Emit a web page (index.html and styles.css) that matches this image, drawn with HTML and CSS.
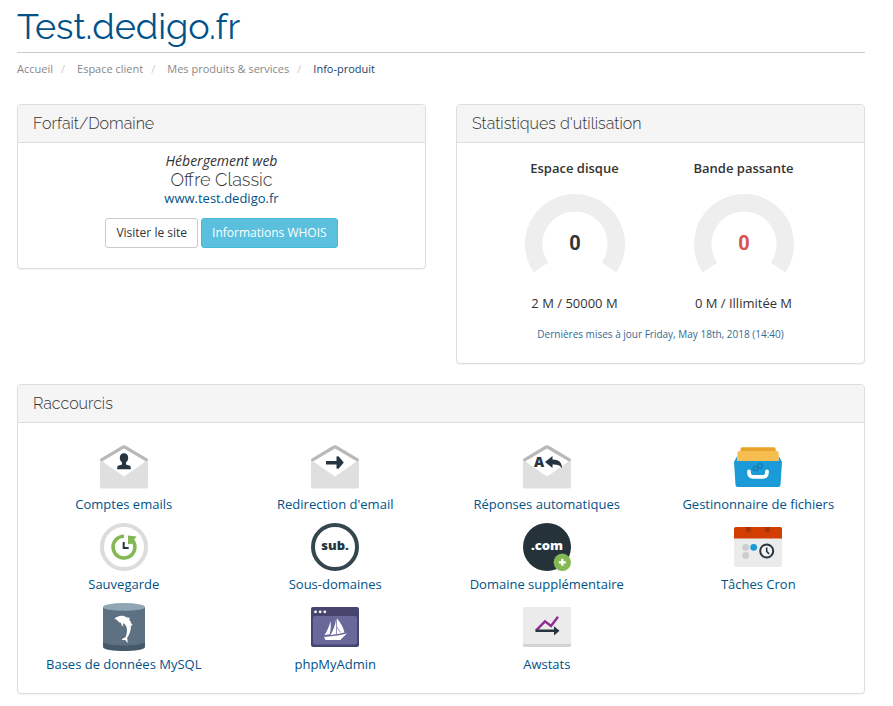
FILE: index.html
```
<!DOCTYPE html>
<html lang="fr">
<head>
<meta charset="utf-8">
<meta name="viewport" content="width=device-width, initial-scale=1">
<title>Test.dedigo.fr</title>
<link rel="stylesheet" href="styles.css">
</head>
<body>
<header class="page-header">
  <h1>Test.dedigo.fr</h1>
  <nav aria-label="Fil d'Ariane">
    <ol class="breadcrumb">
      <li><a href="#">Accueil</a></li>
      <li><a href="#">Espace client</a></li>
      <li><a href="#">Mes produits &amp; services</a></li>
      <li class="active">Info-produit</li>
    </ol>
  </nav>
</header>
<main>
  <div class="columns">
    <section class="panel">
      <h2 class="panel-title">Forfait/Domaine</h2>
      <div class="package">
        <em>Hébergement web</em>
        <h3>Offre Classic</h3>
        <a href="#">www.test.dedigo.fr</a>
        <div class="actions">
          <button type="button" class="btn">Visiter le site</button>
          <button type="button" class="btn btn-info">Informations WHOIS</button>
        </div>
      </div>
    </section>
    <section class="panel">
      <h2 class="panel-title">Statistiques d'utilisation</h2>
      <div class="usage">
        <div class="gauges">
          <div class="gauge">
            <h3>Espace disque</h3>
            <svg width="100" height="80" viewBox="0 0 100 80"><path d="M16 73.500A41.300 41.300 0 1 1 84 73.500" fill="none" stroke="#eee" stroke-width="17.400"/><text x="50" y="56" text-anchor="middle" class="value">0</text></svg>
            <p>2 M / 50000 M</p>
          </div>
          <div class="gauge">
            <h3>Bande passante</h3>
            <svg width="100" height="80" viewBox="0 0 100 80"><path d="M16 73.500A41.300 41.300 0 1 1 84 73.500" fill="none" stroke="#eee" stroke-width="17.400"/><text x="50" y="56" text-anchor="middle" class="value value-alert">0</text></svg>
            <p>0 M / Illimitée M</p>
          </div>
        </div>
        <p class="updated">Dernières mises à jour Friday, May 18th, 2018 (14:40)</p>
      </div>
    </section>
  </div>
  <section class="panel">
    <h2 class="panel-title">Raccourcis</h2>
    <ul class="shortcuts">
      <li><a href="#">
        <svg viewBox="0 0 48 48"><path d="M0 16L22.500 2.600Q24 1.800 25.500 2.600L48 16V22H0Z" fill="#b9b9b9"/><path d="M2 18.500L24 5.500L46 18.500L24 35Z" fill="#fff"/><path d="M0 17L24 33.500L48 17V43.500Q48 45.500 46 45.500H2Q0 45.500 0 43.500Z" fill="#dfdfdf"/><path d="M24 10.300c-2.700 0-4.200 1.900-4.200 4.400 0 2 .9 3.800 2.200 4.700v2l-3.800 1.400c-.8.300-1 1-1 3.500h13.600c0-2.500-.2-3.200-1-3.500L26 21.400v-2c1.300-.9 2.200-2.700 2.200-4.700 0-2.500-1.500-4.400-4.200-4.400z" fill="#263540"/></svg>
        <span>Comptes emails</span></a></li>
      <li><a href="#">
        <svg viewBox="0 0 48 48"><path d="M0 16L22.500 2.600Q24 1.800 25.500 2.600L48 16V22H0Z" fill="#b9b9b9"/><path d="M2 18.500L24 5.500L46 18.500L24 35Z" fill="#fff"/><path d="M0 17L24 33.500L48 17V43.500Q48 45.500 46 45.500H2Q0 45.500 0 43.500Z" fill="#dfdfdf"/><path d="M15 18h10.500v-4.500l2-.2 5.300 6.200-5.300 6.200-2-.2V21.500H15z" fill="#263540"/></svg>
        <span>Redirection d'email</span></a></li>
      <li><a href="#">
        <svg viewBox="0 0 48 48"><path d="M0 16L22.500 2.600Q24 1.800 25.500 2.600L48 16V22H0Z" fill="#b9b9b9"/><path d="M2 18.500L24 5.500L46 18.500L24 35Z" fill="#fff"/><path d="M0 17L24 33.500L48 17V43.500Q48 45.500 46 45.500H2Q0 45.500 0 43.500Z" fill="#dfdfdf"/><text x="16" y="24" text-anchor="middle" class="badge-text badge-letter">A</text><path d="M22 19l7.500-6v3.500c6 0 9.500 2.700 9.500 8.700-2-3-4.500-3.800-9.500-3.600V25z" fill="#263540"/></svg>
        <span>Réponses automatiques</span></a></li>
      <li><a href="#">
        <svg viewBox="0 0 48 48"><path d="M6.500 9V6Q6.500 4.300 8.200 4.300H40Q41.700 4.300 41.700 6V9Z" fill="#e9a32b"/><path d="M3.400 22V10Q3.400 8 5.400 8H42.700Q44.700 8 44.700 10V22Z" fill="#f6bd50"/><path d="M0 19L3.200 13V18H44.800V13L48 19L46.500 42Q46.300 44 44.300 44H3.700Q1.700 44 1.500 42Z" fill="#1a9bd8"/><path d="M15 28.500c0 4 1.200 5.300 4 5.300h10c2.800 0 4-1.300 4-5.300" fill="none" stroke="#fff" stroke-width="3.800" stroke-linecap="round"/><g fill="none" stroke="#137eb6" stroke-width="1.500"><circle cx="21.500" cy="25.500" r="2.200"/><circle cx="26" cy="23" r="2.200"/></g></svg>
        <span>Gestinonnaire de fichiers</span></a></li>
      <li><a href="#">
        <svg viewBox="0 0 48 48"><circle cx="24" cy="24" r="22" fill="#fff" stroke="#dcdcdc" stroke-width="4"/><path d="M24 13.200a10.900 10.900 0 1 0 9 4.800" fill="none" stroke="#84b855" stroke-width="3.600"/><path d="M28 12.400l8.700 1-2.500 3.200 1.300 3-3.500 1.200-4 .5z" fill="#84b855"/><path d="M23.700 19v6h5" fill="none" stroke="#263540" stroke-width="2"/></svg>
        <span>Sauvegarde</span></a></li>
      <li><a href="#">
        <svg viewBox="0 0 48 48"><circle cx="24" cy="24" r="22" fill="#fff" stroke="#35464f" stroke-width="4"/><text x="24" y="27" text-anchor="middle" class="badge-text">sub.</text></svg>
        <span>Sous-domaines</span></a></li>
      <li><a href="#">
        <svg viewBox="0 0 48 48"><circle cx="24" cy="24" r="24" fill="#253239"/><text x="24" y="27" text-anchor="middle" class="badge-text badge-light">.com</text><circle cx="39.300" cy="39.300" r="8.700" fill="#84b855"/><path d="M39.300 35.800v7M35.800 39.300h7" stroke="#fff" stroke-width="2.200"/></svg>
        <span>Domaine supplémentaire</span></a></li>
      <li><a href="#">
        <svg viewBox="0 0 48 48"><rect y="4" width="48" height="40" rx="2" fill="#ebebeb"/><path d="M0 15.500V6Q0 4 2 4H46Q48 4 48 6V15.500Z" fill="#d23e02"/><path d="M12 4h5v4.500q-2.500 2-5 0zM31 4h5v4.500q-2.500 2-5 0z" fill="#ab3205"/><circle cx="11.700" cy="24.300" r="3.400" fill="#ccc"/><circle cx="19.700" cy="24.300" r="3.400" fill="#1a9bd8"/><circle cx="11.700" cy="32.300" r="3.400" fill="#ccc"/><circle cx="32.700" cy="28" r="6.500" fill="#f2f2f2" stroke="#263540" stroke-width="2"/><path d="M32.700 24.500v4l2.400 2.400" fill="none" stroke="#263540" stroke-width="1.600"/></svg>
        <span>Tâches Cron</span></a></li>
      <li><a href="#">
        <svg viewBox="0 0 48 48"><path d="M3 4V44c0 5.300 42 5.300 42 0V4z" fill="#44596a"/><path d="M3 4V38.500c0 5.300 42 5.300 42 0V4z" fill="#5d7183"/><ellipse cx="24" cy="3.900" rx="21" ry="3.900" fill="#8fa6b5"/><path d="M14.300 16c1-1.300 2-1.900 3.300-2.300 3.200-1.400 6.600-1 9.300.8 1.100-.2 2.300 0 3.200.5-.7.400-1 .9-1 1.500 1.200 1.400 1.900 2.600 2.200 3.900.8.600 1.300 1.400 1.400 2.500-.7-.6-1.300-.8-1.800-.7.300 4.600-1.300 9-3.600 12.400-.2 1.800.5 3.200.4 5.500-.9-1-1.500-1.900-2-2.900-1.100-.2-2.700-.2-4.200-.2 1.100-1.400 2.500-2.200 4-2.700 1.600-3.800 2-7.600.9-10.500-.8-1.900-1.900-3-3.200-3.500-.2 1.200-.2 2 .2 3.300-1.500-.8-2.300-1.900-2.500-3.800-2.100-.4-3-1.700-3.800-2.900-.9-.7-1.900-.9-2.800-.9z" fill="#fff"/></svg>
        <span>Bases de données MySQL</span></a></li>
      <li><a href="#">
        <svg viewBox="0 0 48 48"><rect y="4" width="48" height="40" rx="2" fill="#47456e"/><rect x="2" y="13" width="44" height="28.500" rx="2" fill="#6a689b"/><g fill="#fff"><circle cx="4.500" cy="8.800" r="1.400"/><circle cx="9.200" cy="8.800" r="1.400"/><circle cx="13.800" cy="8.800" r="1.400"/><path d="M19.500 18c.6 5 .2 9-.8 13.200l-5.200.8c2.600-4 4.800-8.500 6-14z"/><path d="M25.200 15.300v16l-5.700.6c3-4.900 5-10.600 5.700-16.600z"/><path d="M25.900 15.500c4 4.400 6.300 9 7.600 14l-7.600 1.700z"/><path d="M13 34l14-1.500 9-2-3.800 3.500-2.800 3H14.500z"/></g><path d="M25.700 24l4 5.500" stroke="#6a689b" stroke-width=".7"/></svg>
        <span>phpMyAdmin</span></a></li>
      <li><a href="#">
        <svg viewBox="0 0 48 48"><rect y="4" width="48" height="40" rx="2" fill="#d3d3d3"/><rect y="4" width="48" height="37" rx="2" fill="#ebebeb"/><path d="M13 27.700l9-9.300 6 4.600 7-9.300" fill="none" stroke="#8d2f91" stroke-width="2.400"/><path d="M12.500 26.600h18.500v-3.400l5.500 4.600-5.500 4.600v-3.500H12.500z" fill="#263540"/></svg>
        <span>Awstats</span></a></li>
    </ul>
  </section>
</main>
</body>
</html>
```
FILE: styles.css
```
* {
  box-sizing: border-box;
}

body {
  margin: 0;
  padding: 0 28px 12px 17px;
  background: #fff;
  color: #333;
  font: 13px/18px "Open Sans", sans-serif;
}

h1, h2, h3, p, ul, ol {
  margin: 0;
  padding: 0;
}

ul, ol {
  list-style: none;
}

a {
  color: #015289;
  text-decoration: none;
}

h1, h2, .package h3 {
  font-family: Raleway, Lato, sans-serif;
  font-weight: 400;
}

h1 {
  padding: 6px 0;
  border-bottom: 1px solid #ccc;
  color: #015289;
  font-size: 36px;
  line-height: 40px;
}

.breadcrumb {
  display: flex;
  flex-wrap: wrap;
  padding: 7px 0 26px;
  font-size: 11px;
}

.breadcrumb a {
  color: #888;
}

.breadcrumb .active {
  color: #1b4569;
}

.breadcrumb li + li::before {
  content: "/";
  padding: 0 12px 0 8px;
  color: #ccc;
}

.columns {
  display: grid;
  grid-template-columns: 1fr 1fr;
  align-items: start;
  gap: 30px;
  margin-bottom: 20px;
}

.panel {
  border: 1px solid #ddd;
  border-radius: 4px;
  background: #fff;
  box-shadow: 0 1px 1px rgba(0, 0, 0, 0.05);
}

.panel .panel-title {
  padding: 9px 15px;
  border-bottom: 1px solid #ddd;
  border-radius: 3px 3px 0 0;
  background: #f5f5f5;
  font-size: 16px;
  font-weight: 300;
  line-height: 19px;
}

.package {
  display: flex;
  flex-direction: column;
  align-items: center;
  padding: 9px 15px 20px;
}

.package em {
  font-size: 14px;
}

.package h3 {
  font-size: 18px;
  font-weight: 300;
  line-height: 20px;
}

.package > a {
  line-height: 16px;
}

.actions {
  display: flex;
  gap: 3px;
  margin-top: 12px;
}

.btn {
  padding: 5px 10px;
  border: 1px solid #ccc;
  border-radius: 3px;
  background: #fff;
  color: #333;
  font: 12px/18px "Open Sans", sans-serif;
}

.btn-info {
  border-color: #46b8da;
  background: #5bc0de;
  color: #fff;
}

.usage {
  padding: 16px 15px 20px;
  text-align: center;
}

.gauges {
  display: flex;
  justify-content: center;
  padding-right: 3px;
}

.gauge {
  flex: 0 1 169px;
}

.gauge h3 {
  font-size: 13px;
  font-weight: 600;
}

.gauge svg {
  display: block;
  margin: 17px auto 20px;
}

.value {
  fill: #333;
  font: 700 20px Roboto, sans-serif;
}

.value-alert {
  fill: #d9534f;
}

.updated {
  margin-top: 13px;
  color: #336a92;
  font-size: 10px;
}

.shortcuts {
  display: grid;
  grid-template-columns: repeat(4, 1fr);
  row-gap: 10px;
  padding: 20px 0;
}

.shortcuts a {
  display: flex;
  flex-direction: column;
  align-items: center;
  gap: 4px;
}

.shortcuts svg {
  width: 48px;
  height: 48px;
}

.badge-text {
  fill: #263540;
  font: 800 13px "Open Sans", sans-serif;
}

.badge-letter {
  font-size: 14px;
}

.badge-light {
  fill: #fff;
}
```
